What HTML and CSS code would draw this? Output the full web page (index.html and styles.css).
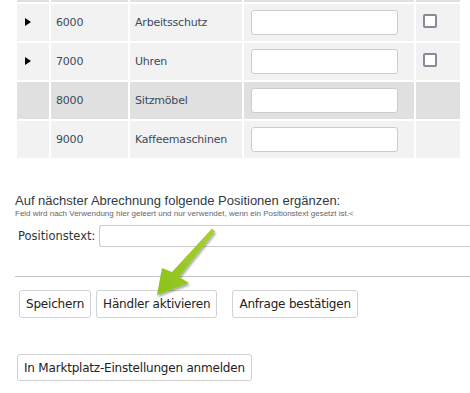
FILE: index.html
```html
<!DOCTYPE html>
<html lang="de">
<head>
<meta charset="utf-8">
<title>Händler</title>
<link rel="stylesheet" href="styles.css">
</head>
<body>
<div class="page">
  <table class="cats">
    <colgroup>
      <col class="k1"><col class="k2"><col class="k3"><col class="k4"><col class="k5">
    </colgroup>
    <tr class="row dark">
      <td class="c1"></td><td class="c2"></td><td class="c3"></td><td class="c4"></td><td class="c5"></td>
    </tr>
    <tr class="row">
      <td class="c1"><span class="tri"></span></td>
      <td class="c2">6000</td>
      <td class="c3">Arbeitsschutz</td>
      <td class="c4"><input class="field" type="text"></td>
      <td class="c5"><span class="check"></span></td>
    </tr>
    <tr class="row">
      <td class="c1"><span class="tri"></span></td>
      <td class="c2">7000</td>
      <td class="c3">Uhren</td>
      <td class="c4"><input class="field" type="text"></td>
      <td class="c5"><span class="check"></span></td>
    </tr>
    <tr class="row dark">
      <td class="c1"></td>
      <td class="c2">8000</td>
      <td class="c3">Sitzmöbel</td>
      <td class="c4"><input class="field" type="text"></td>
      <td class="c5"></td>
    </tr>
    <tr class="row">
      <td class="c1"></td>
      <td class="c2">9000</td>
      <td class="c3">Kaffeemaschinen</td>
      <td class="c4"><input class="field" type="text"></td>
      <td class="c5"></td>
    </tr>
  </table>

  <div class="extra">
    <div class="extra-title">Auf nächster Abrechnung folgende Positionen ergänzen:</div>
    <div class="extra-hint">Feld wird nach Verwendung hier geleert und nur verwendet, wenn ein Positionstext gesetzt ist.&lt;</div>
    <div class="pos-row">
      <label class="pos-label">Positionstext:</label>
      <input class="pos-input" type="text">
    </div>
  </div>

  <div class="rule"></div>

  <div class="btn-row">
    <button class="btn">Speichern</button>
    <button class="btn">Händler aktivieren</button>
    <button class="btn btn-gap">Anfrage bestätigen</button>
  </div>
  <div class="btn-row second">
    <button class="btn btn-tall">In Marktplatz-Einstellungen anmelden</button>
  </div>
</div>

<svg class="arrow" width="470" height="393" viewBox="0 0 470 393" aria-hidden="true">
  <defs>
    <linearGradient id="ag" x1="0" y1="1" x2="1" y2="0">
      <stop offset="0" stop-color="#8cc21c"/>
      <stop offset="1" stop-color="#a6d12e"/>
    </linearGradient>
    <filter id="sh" x="-20%" y="-20%" width="140%" height="140%">
      <feGaussianBlur in="SourceAlpha" stdDeviation="1.2"/>
      <feOffset dx="1" dy="1.5"/>
      <feComponentTransfer><feFuncA type="linear" slope="0.35"/></feComponentTransfer>
      <feMerge><feMergeNode/><feMergeNode in="SourceGraphic"/></feMerge>
    </filter>
  </defs>
  <polygon filter="url(#sh)" fill="url(#ag)" points="212,228.5 215,231.5 179,277 189,283 157,295 162,268 172,272"/>
</svg>
</body>
</html>
```

FILE: styles.css
```css
html, body {
  margin: 0;
  padding: 0;
  background: #ffffff;
}

body {
  width: 470px;
  height: 393px;
  overflow: hidden;
  position: relative;
  font-family: "DejaVu Sans", Verdana, sans-serif;
}

.page {
  padding-left: 15px;
}

.cats {
  border-collapse: separate;
  border-spacing: 2px;
  margin-top: -37px;
  width: 447px;
  table-layout: fixed;
  font-size: 11px;
  letter-spacing: -0.2px;
  color: #3b4a5e;
}

.k1 { width: 32px; }
.k2 { width: 77px; }
.k3 { width: 112px; }
.k4 { width: 170px; }
.k5 { width: 44px; }

.cats td {
  box-sizing: border-box;
  height: 37px;
  padding: 0;
  background: #f2f2f2;
  vertical-align: middle;
}

.cats .dark td {
  background: #e0e0e0;
}

.cats td.c1 {
  padding-left: 8px;
}

.cats td.c2,
.cats td.c3 {
  padding-left: 5px;
}

.cats td.c4,
.cats td.c5 {
  padding-left: 7px;
}

.tri {
  display: block;
  width: 0;
  height: 0;
  border-top: 4.5px solid transparent;
  border-bottom: 4.5px solid transparent;
  border-left: 6px solid #000;
  margin-top: -2px;
}

.field {
  display: block;
  box-sizing: border-box;
  width: 147px;
  height: 25px;
  margin: 0;
  border: 1px solid #cccccc;
  border-radius: 3px;
  background: #fff;
  padding: 0 4px;
}

.check {
  display: block;
  box-sizing: border-box;
  width: 14px;
  height: 14px;
  border: 2px solid #8a8899;
  border-radius: 2px;
  background: #fff;
  margin-top: -3px;
}

.extra {
  margin-top: 33px;
}

.extra-title {
  font-family: "Liberation Sans", Arial, sans-serif;
  font-size: 13px;
  line-height: 15px;
  color: #333a44;
}

.extra-hint {
  font-family: "Liberation Sans", Arial, sans-serif;
  font-size: 8px;
  line-height: 10px;
  color: #666;
  margin-top: 1px;
}

.pos-row {
  display: flex;
  align-items: center;
  margin-top: 6px;
}

.pos-label {
  flex: 0 0 84px;
  box-sizing: border-box;
  padding-left: 3px;
  font-size: 11.5px;
  color: #333;
}

.pos-input {
  box-sizing: border-box;
  flex: 1 1 auto;
  min-width: 0;
  height: 22px;
  margin: 0;
  border: 1px solid #cccccc;
  border-right: none;
  border-radius: 3px 0 0 3px;
  background: #fff;
}

.rule {
  height: 1px;
  background: #c4c4c4;
  margin-top: 29px;
}

.btn-row {
  display: flex;
  gap: 5px;
  margin-top: 13px;
  padding-left: 4px;
}

.btn-row.second {
  margin-top: 36px;
  padding-left: 2px;
}

.btn {
  box-sizing: border-box;
  height: 28px;
  margin: 0;
  padding: 0 6px;
  border: 1px solid #d2d2d2;
  border-radius: 3px;
  background: #fff;
  color: #222;
  font-family: "DejaVu Sans", Verdana, sans-serif;
  font-size: 12px;
  letter-spacing: -0.2px;
}

.btn-gap {
  margin-left: 10px;
}

.btn-tall {
  height: 27px;
}

.arrow {
  position: absolute;
  left: 0;
  top: 0;
  pointer-events: none;
}
```
